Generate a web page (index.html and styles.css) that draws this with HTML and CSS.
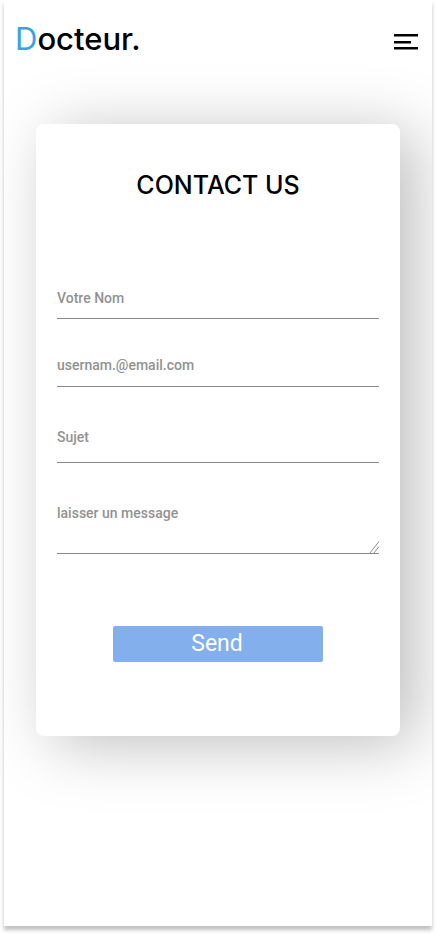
FILE: index.html
```html
<!DOCTYPE html>
<html lang="fr">
<head>
  <meta charset="utf-8">
  <meta name="viewport" content="width=device-width, initial-scale=1">
  <title>Docteur. Contact</title>
  <link rel="stylesheet" href="styles.css">
</head>
<body>
  <div class="page">
    <header class="header">
      <a class="logo" href="#"><span class="logo-initial">D</span>octeur.</a>
      <button class="menu-button" type="button" aria-label="Menu">
        <svg width="24" height="16" viewBox="0 0 24 16" aria-hidden="true">
          <path d="M0 0H24V2.5H0ZM0 7H17V9.5H0ZM0 13H24V15.5H0Z"/>
        </svg>
      </button>
    </header>
    <main class="content">
      <form class="card">
        <h1 class="title">CONTACT US</h1>
        <div class="fields">
          <input class="field" type="text" placeholder="Votre Nom" aria-label="Votre Nom">
          <input class="field field-email" type="email" placeholder="usernam.@email.com" aria-label="Email">
          <input class="field field-subject" type="text" placeholder="Sujet" aria-label="Sujet">
          <div class="message">
            <textarea class="field field-message" placeholder="laisser un message" aria-label="Message"></textarea>
            <svg class="grip" width="10" height="13" viewBox="0 0 10 13" aria-hidden="true">
              <path d="M0.5 12.5L10 0.5M4.5 12.5L10 5.5"/>
            </svg>
          </div>
        </div>
        <button class="send" type="submit">Send</button>
      </form>
    </main>
  </div>
</body>
</html>
```
FILE: styles.css
```css
* {
  box-sizing: border-box;
}

body {
  margin: 0;
  padding: 0 4px 8px;
  min-height: 100vh;
  display: flex;
  background: #fff;
  font-family: Roboto, "Liberation Sans", sans-serif;
}

.page {
  flex: 1;
  min-width: 0;
  overflow: hidden;
  background: #fff;
  box-shadow: 0 4px 4px rgba(0, 0, 0, 0.25);
}

.header {
  display: flex;
  align-items: center;
  justify-content: space-between;
  height: 84px;
  padding: 0 14px 6px 11px;
}

.logo {
  color: #000;
  font-family: Inter, sans-serif;
  font-size: 31px;
  font-weight: 500;
  line-height: 40px;
  text-decoration: none;
}

.logo-initial {
  color: #38a3e4;
  font-weight: 400;
}

.menu-button {
  display: flex;
  padding: 6px 0 0;
  border: 0;
  background: none;
}

.content {
  padding: 40px 32px;
}

.card {
  display: flex;
  flex-direction: column;
  padding: 45px 21px 74px;
  border-radius: 8px;
  background: #fff;
  box-shadow: 16px 8px 64px rgba(0, 0, 0, 0.26);
}

.title {
  margin: 0 0 87px;
  color: #000;
  font-family: Inter, sans-serif;
  font-size: 25px;
  font-weight: 500;
  line-height: 32px;
  text-align: center;
}

.fields {
  display: flex;
  flex-direction: column;
  gap: 36px;
}

.field {
  display: block;
  width: 100%;
  padding: 0 0 10px;
  border: 0;
  border-bottom: 1px solid #8a8a8a;
  border-radius: 0;
  outline: 0;
  background: none;
  color: #333;
  font: 500 14px/20px Roboto, "Liberation Sans", sans-serif;
}

.field::placeholder {
  color: #929292;
  opacity: 1;
}

input.field {
  height: 31px;
}

input.field-email {
  height: 32px;
  padding-bottom: 11px;
}

input.field-subject {
  height: 40px;
  padding: 4px 0 15px;
}

.message {
  position: relative;
}

.field-message {
  height: 55px;
  padding-top: 4px;
  overflow: hidden;
  resize: none;
}

.grip {
  position: absolute;
  right: 0;
  bottom: 0;
  fill: none;
  stroke: #8a8a8a;
  pointer-events: none;
}

.send {
  align-self: center;
  width: 210px;
  max-width: 100%;
  height: 36px;
  margin-top: 72px;
  padding: 0 2px 0 0;
  border: 0;
  border-radius: 2px;
  background: #83afec;
  color: #fff;
  font: 400 23px/36px Roboto, "Liberation Sans", sans-serif;
}
```
